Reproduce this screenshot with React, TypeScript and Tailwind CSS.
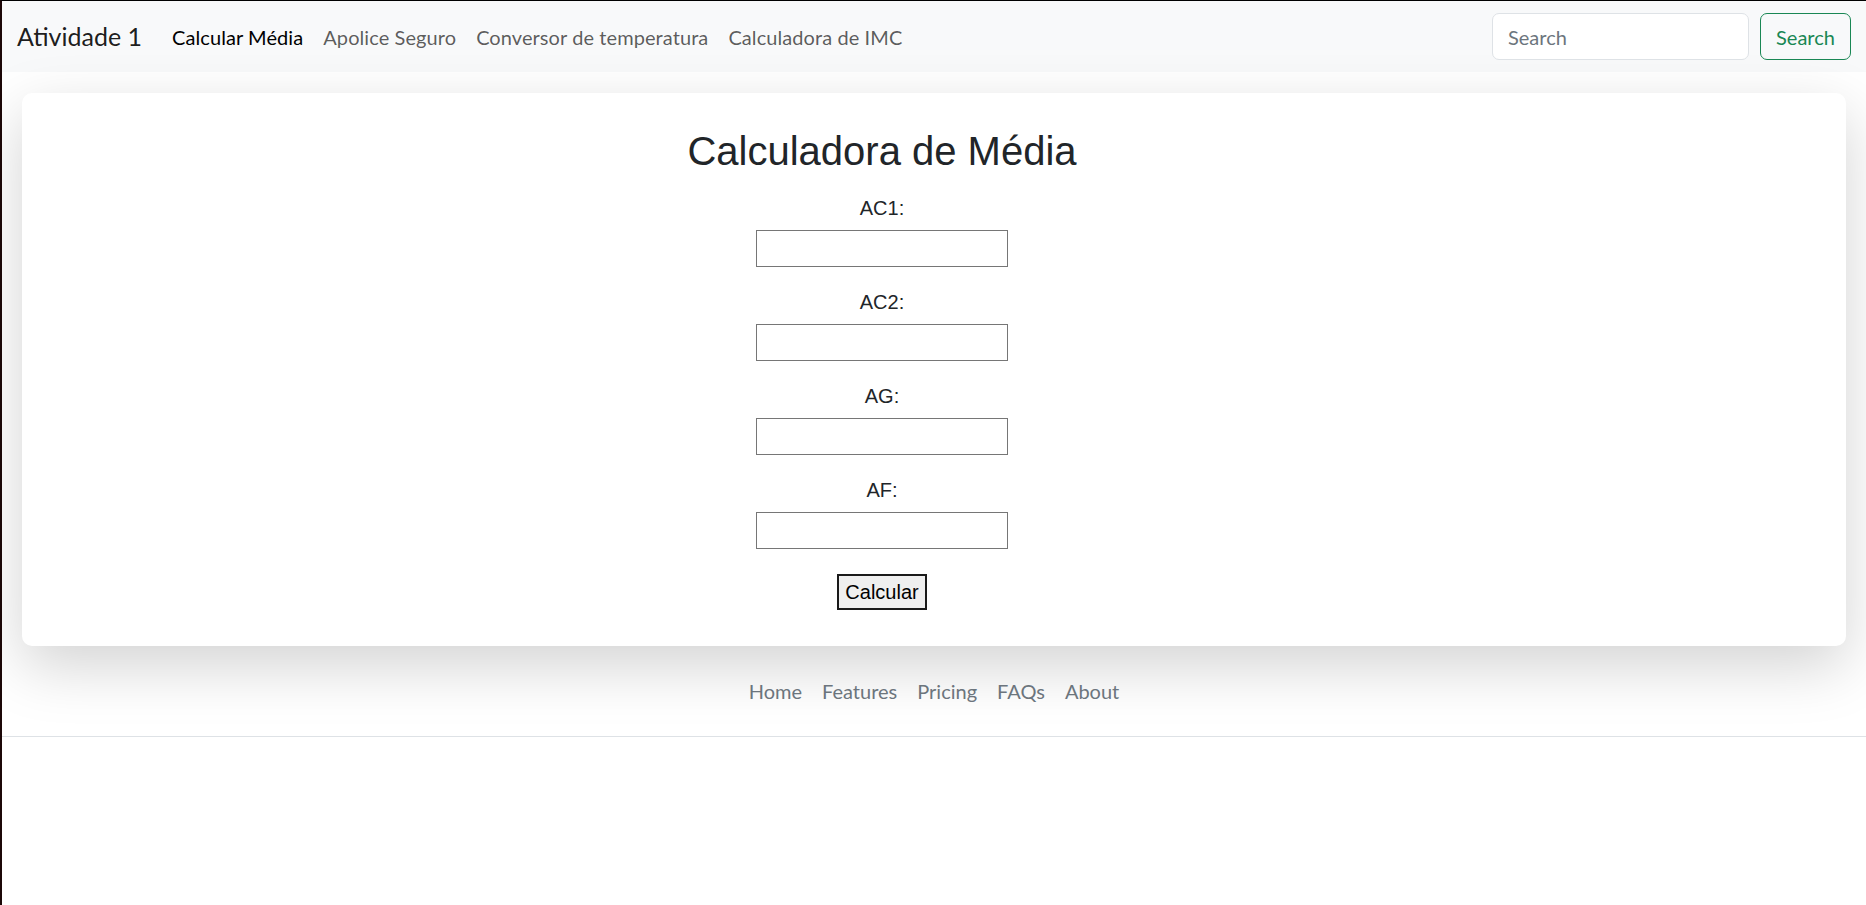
import { useState } from "react";

const navLinks = ["Calcular Média", "Apolice Seguro", "Conversor de temperatura", "Calculadora de IMC"];
const footerLinks = ["Home", "Features", "Pricing", "FAQs", "About"];
const fields = ["AC1", "AC2", "AG", "AF"];

const ui = "font-['Segoe_UI','Lato','Noto_Sans',sans-serif]";
const arial = "font-['Liberation_Sans',Arial,sans-serif]";

export default function App() {
  const [values, setValues] = useState<Record<string, string>>({});
  const [search, setSearch] = useState("");

  return (
    <div className={`min-h-screen bg-white border-l-2 border-t border-l-[#1c0808] border-t-black ${ui}`}>
      {/* Navbar */}
      <nav className="h-[71px] bg-[#f8f9fa] flex items-center px-[15px]">
        <span className="text-[25px] leading-[37px] text-black/90 mr-[20px]">Atividade 1</span>
        <ul className="flex items-center">
          {navLinks.map((l, i) => (
            <li key={l}>
              <a
                href="#"
                className={`block px-[10px] py-[10px] text-[20px] leading-[30px] tracking-[0.08px] ${
                  i === 0 ? "text-black" : "text-black/65"
                }`}
              >
                {l}
              </a>
            </li>
          ))}
        </ul>
        <form className="ml-auto flex items-center gap-[11px]" onSubmit={(e) => e.preventDefault()}>
          <input
            type="search"
            value={search}
            onChange={(e) => setSearch(e.target.value)}
            placeholder="Search"
            className="w-[257px] h-[47px] bg-white border border-[#dee2e6] rounded-[7px] px-[15px] text-[20px] text-[#212529] placeholder-[#6c757d] outline-none"
          />
          <button
            type="submit"
            className="h-[47px] w-[91px] border border-[#198754] rounded-[7px] text-[20px] text-[#198754]"
          >
            Search
          </button>
        </form>
      </nav>

      {/* Card */}
      <div className="mx-[20px] mt-[21px] bg-white rounded-[10px] shadow-[0_20px_60px_rgba(0,0,0,0.175)]">
        <div className={`flex flex-col items-center pt-[35px] pb-[36px] pr-[104px] ${arial}`}>
          <h1 className="text-[40px] leading-[46px] text-[#212529] mb-[23px]">Calculadora de Média</h1>
          {fields.map((f, i) => (
            <div key={f} className={`flex flex-col items-center ${i > 0 ? "mt-[24px]" : ""}`}>
              <label className="text-[20px] leading-[23px] text-[#212529]">{f}:</label>
              <input
                type="number"
                value={values[f] ?? ""}
                onChange={(e) => setValues({ ...values, [f]: e.target.value })}
                className="mt-[10px] w-[252px] h-[37px] border border-[#767676] bg-white px-[3px] text-[20px] outline-none"
              />
            </div>
          ))}
          <button className="mt-[25px] w-[90px] h-[36px] bg-[#efefef] border-2 border-[#1a1a1a] text-[20px] leading-[23px] text-black">
            Calcular
          </button>
        </div>
      </div>

      {/* Footer */}
      <footer className="mt-[20px]">
        <ul className="flex justify-center pb-[20px] border-b border-[#dee2e6]">
          {footerLinks.map((l) => (
            <li key={l}>
              <a href="#" className="block px-[10px] py-[10px] text-[20px] leading-[30px] text-[#6c757d]">
                {l}
              </a>
            </li>
          ))}
        </ul>
      </footer>
    </div>
  );
}
